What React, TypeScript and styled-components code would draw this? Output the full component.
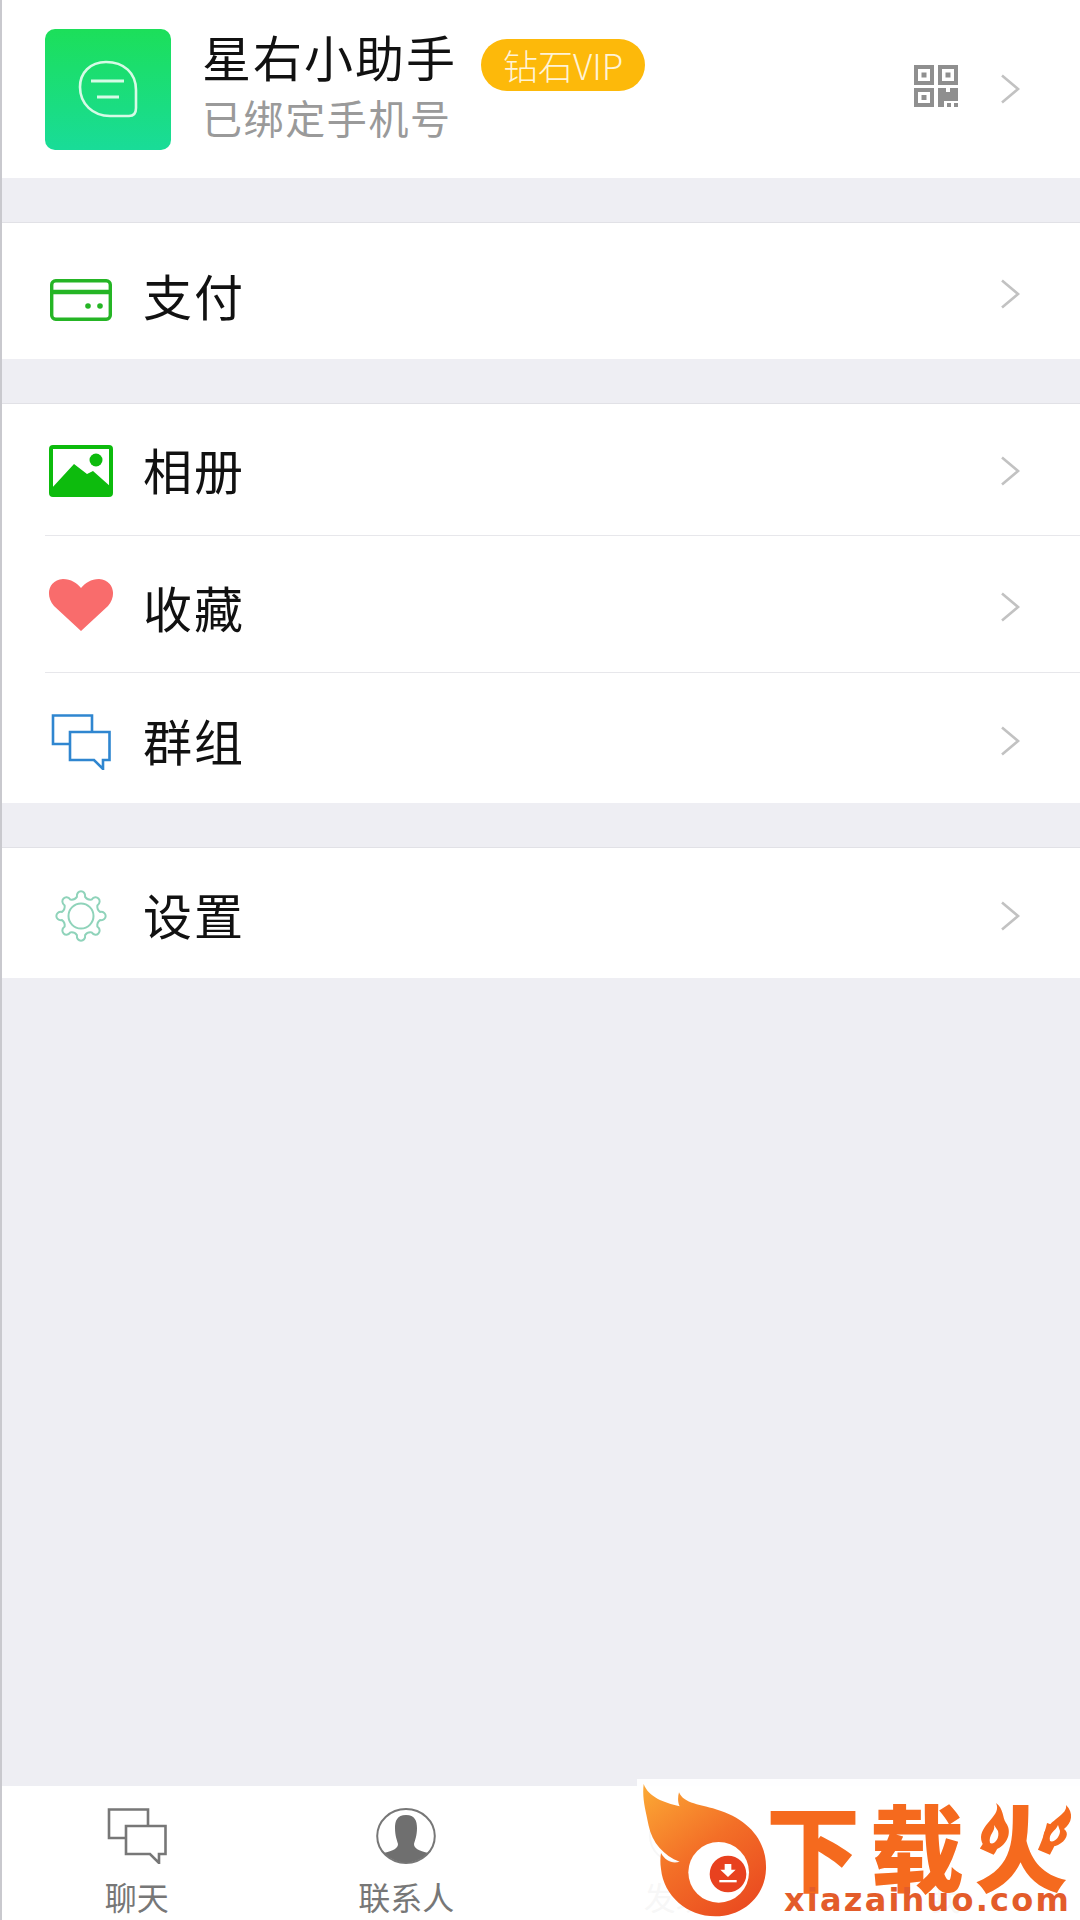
import React from 'react'
import styled, { createGlobalStyle } from 'styled-components'

const GlobalStyle = createGlobalStyle`
  html, body {
    margin: 0;
    padding: 0;
    background: #eeeef3;
    font-family: "Noto Sans CJK SC", "Liberation Sans", sans-serif;
  }
  * { box-sizing: border-box; }
`

const Page = styled.div`
  position: relative;
  display: flex;
  flex-direction: column;
  width: 1080px;
  height: 1920px;
  overflow: hidden;
  background: #eeeef3;
  border-left: 2px solid #c9c9ce;
`

const Header = styled.header`
  display: flex;
  align-items: center;
  height: 178px;
  padding: 0 60px 0 43px;
  background: #fff;
`

const Avatar = styled.div`
  display: flex;
  flex: none;
  align-items: center;
  justify-content: center;
  width: 126px;
  height: 121px;
  border-radius: 10px;
  background: linear-gradient(180deg, #1cdf5a 0%, #19dc98 100%);
`

const Info = styled.div`
  display: flex;
  flex-direction: column;
  margin-left: 31px;
  margin-top: -10px;
`

const TitleRow = styled.div`
  display: flex;
  align-items: center;
  height: 56px;
`

const Name = styled.span`
  font-size: 49px;
  line-height: 1;
  letter-spacing: 2px;
  color: #111;
`

const Badge = styled.span`
  display: inline-flex;
  align-items: center;
  justify-content: center;
  width: 164px;
  height: 52px;
  margin: 18px 0 0 24px;
  border-radius: 27px;
  background: #fdb90a;
  color: #fff3d6;
  font-size: 35px;
  font-weight: 300;
`

const Phone = styled.span`
  margin-top: 9px;
  font-size: 40px;
  line-height: 1.2;
  letter-spacing: 1.6px;
  color: #9a9a9a;
`

const HeaderRight = styled.div`
  display: flex;
  align-items: center;
  gap: 42px;
  margin-left: auto;
`

const GroupGap = styled.div`
  height: 45px;
  flex: none;
  border-bottom: 1px solid #e1e1e6;
`

const RowList = styled.section`
  display: flex;
  flex-direction: column;
  background: #fff;
`

const Row = styled.div<{ $height: number; $shift: number }>`
  display: flex;
  align-items: center;
  height: ${({ $height }) => $height}px;
  padding: ${({ $shift }) => $shift}px 60px 0 43px;
  background: #fff;
`

const RowDivider = styled.div`
  height: 1px;
  margin-left: 43px;
  background: #e7e7eb;
`

const IconSlot = styled.div`
  display: flex;
  align-items: center;
  justify-content: center;
  width: 72px;
  height: 60px;
`

const RowLabel = styled.span`
  margin: 0 0 5px 26px;
  font-size: 49px;
  line-height: 1;
  letter-spacing: 2px;
  color: #111;
`

const RowChevron = styled.div<{ $lift: number }>`
  display: flex;
  margin-left: auto;
  margin-bottom: ${({ $lift }) => $lift}px;
`

const Filler = styled.div`
  flex: 1;
`

const TabBar = styled.nav`
  display: grid;
  grid-template-columns: repeat(4, 1fr);
  height: 134px;
  background: #fff;
`

const Tab = styled.div`
  display: flex;
  flex-direction: column;
  align-items: center;
  padding-top: 22px;
`

const TabIcon = styled.div`
  display: flex;
  align-items: center;
  justify-content: center;
  height: 56px;
`

const TabLabel = styled.span`
  margin-top: 14px;
  font-size: 32px;
  line-height: 36px;
  color: #777;
`

const Watermark = styled.aside`
  position: absolute;
  left: 635px;
  right: 0;
  bottom: 0;
  display: flex;
  height: 141px;
  padding-left: 129px;
  background: rgba(255, 255, 255, 0.94);
`

const BrandColumn = styled.div`
  display: flex;
  flex-direction: column;
  width: 312px;
`

const BrandName = styled.div`
  height: 83px;
  margin-top: 24px;
  font-size: 94px;
  line-height: 83px;
  font-weight: 900;
  letter-spacing: 10px;
  color: #f56a1e;
  white-space: nowrap;
`

const BrandUrl = styled.div`
  margin: 1px 0 0 18px;
  font-family: "DejaVu Sans", sans-serif;
  font-size: 32px;
  line-height: 26px;
  font-weight: 700;
  letter-spacing: 2.2px;
  color: #e35c2a;
  white-space: nowrap;
`

const OverlaySvg = styled.svg`
  position: absolute;
  pointer-events: none;
`

const Chevron = () => (
  <svg width="20" height="30" viewBox="0 0 20 30" fill="none">
    <path d="M2 1.5 L18 15 L2 28.5" stroke="#c2c2c2" strokeWidth="2.6" />
  </svg>
)

const BubbleIcon = () => (
  <svg width="60" height="58" viewBox="0 0 60 58" fill="none" stroke="#d6fbe6" strokeWidth="2.6">
    <path d="M28 2 C12 2 2 13 2 27 C2 44 15 56 32 56 L51 56 C56 56 58 53 58 48 L58 30 C58 13 46 2 28 2 Z" />
    <path d="M13 21 H46 M19 37 H41" strokeWidth="3" />
  </svg>
)

const QrIcon = () => (
  <svg width="44" height="42" viewBox="0 0 44 42" fill="#8f8f8f" style={{ marginTop: -6 }}>
    <path fillRule="evenodd" d="M0 0H20V20H0Z M4 4V16H16V4Z" />
    <rect x="7.5" y="7.5" width="5" height="5" />
    <path fillRule="evenodd" d="M24 0H44V20H24Z M28 4V16H40V4Z" />
    <rect x="31.5" y="7.5" width="5" height="5" />
    <path fillRule="evenodd" d="M0 23H20V42H0Z M4 27V38H16V27Z" />
    <rect x="7.5" y="30" width="5" height="5" />
    <path d="M24 23H32V27H36V23H44V36H30V42H24Z" />
    <rect x="33" y="38" width="4" height="4" />
    <rect x="40" y="38" width="4" height="4" />
  </svg>
)

const CardIcon = () => (
  <svg width="62" height="42" viewBox="0 0 62 42" fill="none" stroke="#25b525" strokeWidth="3.4" style={{ marginTop: 6 }}>
    <rect x="1.7" y="1.7" width="58.6" height="38.6" rx="4" />
    <path d="M1.7 13 H60.3" strokeWidth="4.4" />
    <circle cx="38" cy="27" r="2.8" fill="#25b525" stroke="none" />
    <circle cx="50" cy="27" r="2.8" fill="#25b525" stroke="none" />
  </svg>
)

const PictureIcon = () => (
  <svg width="64" height="52" viewBox="0 0 64 52">
    <rect x="2" y="2" width="60" height="48" rx="2" fill="#fff" stroke="#0dbb0d" strokeWidth="4" />
    <path d="M2 44 L25 19 L38 29 L44 26 L62 42 V50 H2 Z" fill="#0dbb0d" />
    <circle cx="47" cy="15" r="6.5" fill="#0dbb0d" />
  </svg>
)

const HeartIcon = () => (
  <svg width="66" height="52" viewBox="0 0 66 52" style={{ marginTop: -8 }}>
    <path
      d="M33 52 L6 27 C-3 17 0 1 15 0 C23 0 29 4 33 9 C37 4 43 0 51 0 C66 1 69 17 60 27 Z"
      fill="#f96c6c"
    />
  </svg>
)

const ChatsIcon = ({ color }: { color: string }) => (
  <svg width="60" height="56" viewBox="0 0 60 56" fill="none" stroke={color} strokeWidth="2.6">
    <path d="M19 30 H2 V1.5 H41 V17" />
    <path d="M19 18 H58.5 V46 H52 V55 L43 46 H19 Z" fill="#fff" />
  </svg>
)

// eight rounded teeth, walked around the centre
const gearPath = (() => {
  const teeth = 8
  const outer = 26
  const root = 19.5
  const at = (r: number, a: number) => `${(28 + r * Math.cos(a)).toFixed(2)} ${(28 + r * Math.sin(a)).toFixed(2)}`
  let d = ''
  for (let i = 0; i < teeth; i++) {
    const a = (i * 2 * Math.PI) / teeth - Math.PI / 2
    const step = (2 * Math.PI) / teeth
    d += `${i === 0 ? 'M' : 'L'}${at(root, a - step * 0.27)} `
    d += `C${at(outer + 1, a - step * 0.24)} ${at(outer + 1, a + step * 0.24)} ${at(root, a + step * 0.27)} `
    d += `Q${at(root - 2.5, a + step * 0.5)} ${at(root, a + step * 0.73)} `
  }
  return d + 'Z'
})()

const GearIcon = () => (
  <svg width="56" height="56" viewBox="0 0 56 56" fill="none" stroke="#8fd3ba" strokeWidth="2">
    <path d={gearPath} />
    <circle cx="28" cy="28" r="12.5" />
  </svg>
)

const PersonIcon = () => (
  <svg width="60" height="56" viewBox="0 0 60 56">
    <defs>
      <clipPath id="personClip">
        <ellipse cx="30" cy="28" rx="28" ry="26.5" />
      </clipPath>
    </defs>
    <ellipse cx="30" cy="28" rx="28.8" ry="27" fill="#fff" stroke="#777" strokeWidth="2" />
    <g clipPath="url(#personClip)" fill="#6f6f6f">
      <path d="M30 7 C21 7 19 13 19 20 C19 28 21 32 22 36 C22 40 18 43 7 45 L0 56 H60 L53 45 C42 43 38 40 38 36 C39 32 41 28 41 20 C41 13 39 7 30 7 Z" />
    </g>
  </svg>
)

const CompassIcon = () => (
  <svg width="56" height="56" viewBox="0 0 56 56" fill="none" stroke="#777" strokeWidth="2">
    <circle cx="28" cy="28" r="26" />
    <path d="M38 16 L24 24 L18 40 L32 32 Z" fill="#777" stroke="none" />
  </svg>
)

const FlameLogo = () => (
  <OverlaySvg width="134" height="141" viewBox="50 50 402 423" style={{ left: 0, top: 0 }}>
    <defs>
      <linearGradient id="flameFill" x1="0.1" y1="0" x2="0.8" y2="1">
        <stop offset="0" stopColor="#fba534" />
        <stop offset="0.5" stopColor="#f36f27" />
        <stop offset="1" stopColor="#ea4a20" />
      </linearGradient>
    </defs>
    <path
      d="M70 65 C85 105 130 120 178 132 C172 120 172 105 176 90 C190 125 240 125 300 145 C390 175 440 240 437 320 C435 400 370 462 285 462 C200 462 130 400 122 320 C119 300 120 285 122 272 C135 295 155 305 178 298 C130 280 95 240 85 190 C75 140 65 110 70 65 Z"
      fill="url(#flameFill)"
    />
    <circle cx="295" cy="330" r="91" fill="#fff" />
    <circle cx="323" cy="335" r="55" fill="#e8411f" />
    <path d="M313 305 H333 V322 H346 L323 344 L300 322 H313 Z" fill="#fff" />
    <rect x="297" y="353" width="52" height="7" fill="#fff" />
  </OverlaySvg>
)

const FireLicks = () => (
  <OverlaySvg width="310" height="54" viewBox="0 0 310 54" style={{ left: 133, top: 22 }}>
    <path
      d="M226 2 C232 14 212 22 211 36 C211 46 220 52 229 47 C238 42 242 30 236 22 C232 16 234 8 226 2 Z"
      fill="#f56a1e"
    />
    <path d="M224 24 C226 30 218 34 220 42 C224 44 230 38 228 30 Z" fill="#fff" />
    <path
      d="M296 4 C298 14 280 18 274 32 C271 42 280 48 288 44 C296 40 300 32 294 28 C302 22 304 12 296 4 Z"
      fill="#f56a1e"
    />
    <path d="M288 24 C286 30 278 32 280 40 C284 42 290 36 290 30 Z" fill="#fff" />
  </OverlaySvg>
)

const rows = [
  { label: '相册', height: 131, shift: 3, lift: 0, icon: <PictureIcon /> },
  { label: '收藏', height: 136, shift: 10, lift: 5, icon: <HeartIcon /> },
  { label: '群组', height: 130, shift: 7, lift: 2, icon: <ChatsIcon color="#2f86d0" /> },
]

export default function App() {
  return (
    <Page>
      <GlobalStyle />
      <Header>
        <Avatar>
          <BubbleIcon />
        </Avatar>
        <Info>
          <TitleRow>
            <Name>星右小助手</Name>
            <Badge>钻石VIP</Badge>
          </TitleRow>
          <Phone>已绑定手机号</Phone>
        </Info>
        <HeaderRight>
          <QrIcon />
          <Chevron />
        </HeaderRight>
      </Header>

      <GroupGap />
      <RowList>
        <Row $height={136} $shift={12}>
          <IconSlot>
            <CardIcon />
          </IconSlot>
          <RowLabel>支付</RowLabel>
          <RowChevron $lift={7}>
            <Chevron />
          </RowChevron>
        </Row>
      </RowList>

      <GroupGap />
      <RowList>
        {rows.map((row, i) => (
          <React.Fragment key={row.label}>
            {i > 0 && <RowDivider />}
            <Row $height={row.height} $shift={row.shift}>
              <IconSlot>{row.icon}</IconSlot>
              <RowLabel>{row.label}</RowLabel>
              <RowChevron $lift={row.lift}>
                <Chevron />
              </RowChevron>
            </Row>
          </React.Fragment>
        ))}
      </RowList>

      <GroupGap />
      <RowList>
        <Row $height={130} $shift={6}>
          <IconSlot>
            <GearIcon />
          </IconSlot>
          <RowLabel>设置</RowLabel>
          <RowChevron $lift={0}>
            <Chevron />
          </RowChevron>
        </Row>
      </RowList>

      <Filler />

      <TabBar>
        <Tab>
          <TabIcon>
            <ChatsIcon color="#777" />
          </TabIcon>
          <TabLabel>聊天</TabLabel>
        </Tab>
        <Tab>
          <TabIcon>
            <PersonIcon />
          </TabIcon>
          <TabLabel>联系人</TabLabel>
        </Tab>
        <Tab>
          <TabIcon>
            <CompassIcon />
          </TabIcon>
          <TabLabel>发现</TabLabel>
        </Tab>
        <Tab>
          <TabIcon />
          <TabLabel>我</TabLabel>
        </Tab>
      </TabBar>

      <Watermark>
        <FlameLogo />
        <FireLicks />
        <BrandColumn>
          <BrandName>下载火</BrandName>
          <BrandUrl>xiazaihuo.com</BrandUrl>
        </BrandColumn>
      </Watermark>
    </Page>
  )
}
